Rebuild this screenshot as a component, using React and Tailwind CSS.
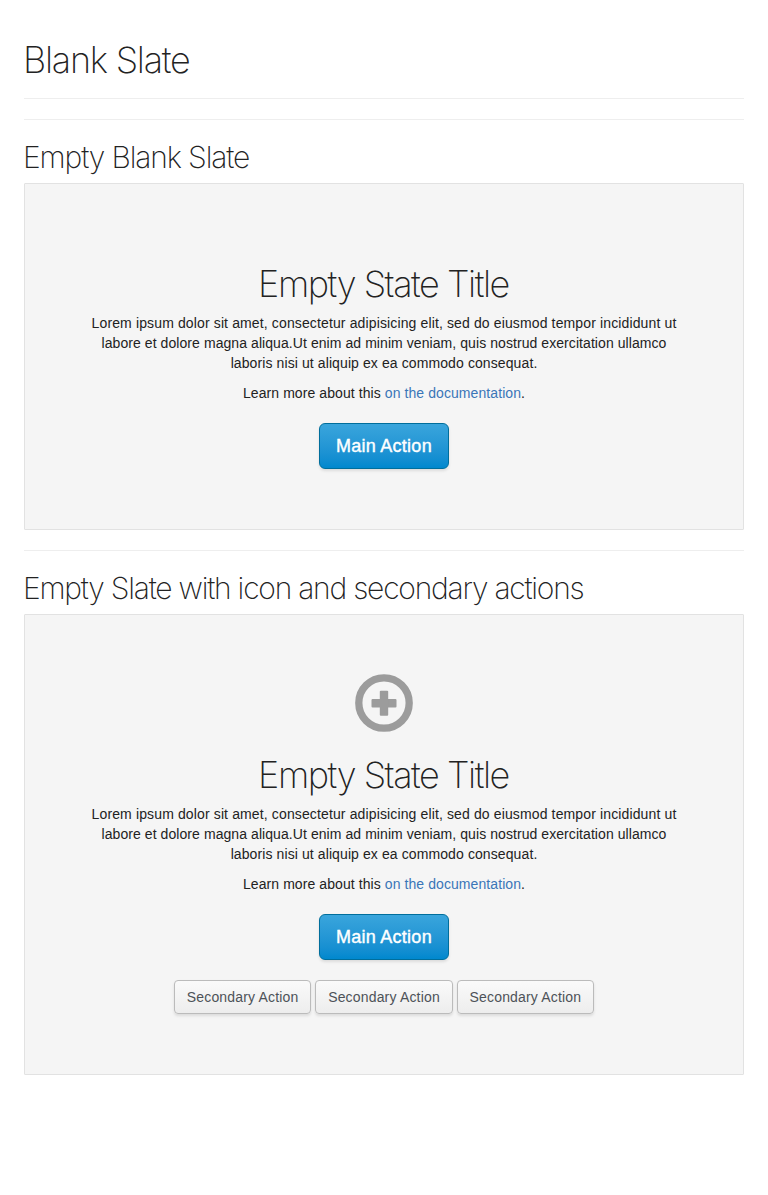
const light = "[font-family:'Inter','Liberation_Sans',sans-serif] font-extralight text-[#222]";

function PlusCircleIcon() {
  return (
    <svg className="mx-auto mb-[22px] block size-[58px]" viewBox="0 0 58 58" aria-hidden="true">
      <circle cx="29" cy="29" r="25.2" fill="none" stroke="#9c9c9c" strokeWidth="7.3" />
      <rect x="16.5" y="25.1" width="25" height="8.4" rx="1" fill="#9c9c9c" />
      <rect x="24.8" y="16.8" width="8.4" height="25" rx="1" fill="#9c9c9c" />
    </svg>
  );
}

function Slate({ icon, children }) {
  return (
    <section className="rounded-[1px] border border-[#e2e2e2] bg-[#f5f5f5] px-[59px] pt-[59px] pb-[60px] text-center">
      {icon}
      <h1 className={`${light} ${icon ? "" : "mt-5"} pr-px text-[36px] leading-[42px] tracking-[-1.45px] whitespace-nowrap`}>
        Empty State Title
      </h1>
      <p className="mt-2 text-[14px] leading-5">
        <span className="block tracking-[0.13px] whitespace-nowrap">Lorem ipsum dolor sit amet, consectetur adipisicing elit, sed do eiusmod tempor incididunt ut</span>
        <span className="block tracking-[0.07px] whitespace-nowrap">labore et dolore magna aliqua.Ut enim ad minim veniam, quis nostrud exercitation ullamco</span>
        <span className="block tracking-[0.1px] whitespace-nowrap">laboris nisi ut aliquip ex ea commodo consequat.</span>
      </p>
      <p className="mt-[10px] text-[14px] leading-5 tracking-[0.08px]">
        Learn more about this <a href="#" className="text-[#3a76b8]">on the documentation</a>.
      </p>
      {children}
    </section>
  );
}

function MainAction() {
  return (
    <button className="mx-auto mt-5 block h-[46px] w-[130px] rounded-[6px] border border-[#006e9c] bg-linear-to-b from-[#39a5dc] to-[#0088ce] text-[18px] tracking-[0.25px] text-white shadow-[0_2px_3px_rgba(3,3,3,0.1)] [-webkit-text-stroke:0.4px_white]">
      Main Action
    </button>
  );
}

function SecondaryAction() {
  return (
    <button className="h-[34px] w-[137.6px] rounded border border-[#bbb] bg-linear-to-b from-[#fafafa] to-[#ededed] text-[14px] tracking-[0.17px] whitespace-nowrap text-[#4d5258] shadow-[0_2px_3px_rgba(3,3,3,0.1)]">
      Secondary Action
    </button>
  );
}

export default function App() {
  return (
    <main className="h-[1195px] bg-white px-6 pt-10 text-[#222] [font-family:'Liberation_Sans',Arial,sans-serif]">
      <h1 className={`${light} -ml-px text-[36px] leading-10 tracking-[-1.25px]`}>Blank Slate</h1>
      <hr className="mt-[18px] border-[#eee]" />
      <hr className="mt-5 border-[#eee]" />
      <h2 className={`${light} mt-[21px] mb-[9px] -ml-px text-[30px] leading-[33px] tracking-[-1.13px]`}>Empty Blank Slate</h2>
      <Slate>
        <MainAction />
      </Slate>
      <hr className="mt-5 border-[#eee]" />
      <h2 className={`${light} mt-[21px] mb-[9px] -ml-px text-[30px] leading-[33px] tracking-[-1.23px]`}>Empty Slate with icon and secondary actions</h2>
      <Slate icon={<PlusCircleIcon />}>
        <MainAction />
        <div className="mt-5 flex justify-center gap-[3.8px]">
          <SecondaryAction />
          <SecondaryAction />
          <SecondaryAction />
        </div>
      </Slate>
    </main>
  );
}
